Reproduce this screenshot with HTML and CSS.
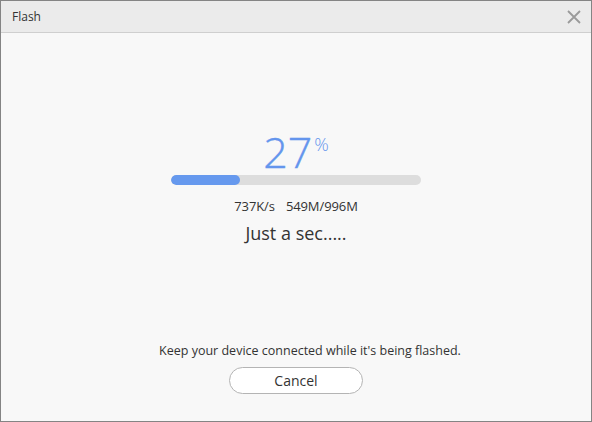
FILE: index.html
```html
<!DOCTYPE html>
<html lang="en">
<head>
  <meta charset="UTF-8">
  <title>Flash</title>
  <link rel="stylesheet" href="styles.css">
</head>
<body>
  <div class="window">
    <div class="titlebar">
      <span class="title">Flash</span>
      <svg class="close" width="14" height="14" viewBox="0 0 14 14">
        <path d="M1 1 L13 13 M13 1 L1 13" stroke="#9a9a9a" stroke-width="1.8" fill="none"/>
      </svg>
    </div>
    <div class="content">
      <div class="percent"><span class="num">27</span><span class="sign">%</span></div>
      <div class="track"><div class="fill" style="width: 27.6%"></div></div>
      <div class="stats"><span>737K/s</span><span>549M/996M</span></div>
      <div class="status">Just a sec.....</div>
      <div class="spacer"></div>
      <div class="note">Keep your device connected while it's being flashed.</div>
      <button class="cancel">Cancel</button>
    </div>
  </div>
</body>
</html>
```

FILE: styles.css
```css
html, body {
  margin: 0;
  padding: 0;
}
body {
  font-family: "Open Sans", "Noto Sans", sans-serif;
  color: #333;
}
.window {
  width: 592px;
  height: 422px;
  box-sizing: border-box;
  border: 1px solid #848484;
  background: #f8f8f8;
  display: flex;
  flex-direction: column;
}
.titlebar {
  height: 32px;
  box-sizing: border-box;
  background: #ebebeb;
  border-bottom: 1px solid #cfcfcf;
  display: flex;
  align-items: center;
  justify-content: space-between;
  padding: 0 10px 0 11px;
}
.title {
  font-size: 12px;
  color: #333;
}
.content {
  flex: 1;
  display: flex;
  flex-direction: column;
  align-items: center;
}
.percent {
  margin-top: 97px;
  height: 43px;
  line-height: 43px;
  color: #6495ed;
  display: flex;
  align-items: flex-start;
  margin-left: 0;
}
.num {
  font-size: 43px;
  font-weight: 300;
  -webkit-text-stroke: 0.4px #6495ed;
}
.sign {
  font-size: 18px;
  line-height: 28px;
  font-weight: 300;
  margin-left: 2px;
}
.track {
  margin-top: 2px;
  width: 250px;
  height: 10px;
  border-radius: 5px;
  background: #dddddd;
  overflow: hidden;
}
.fill {
  height: 100%;
  background: #6699ee;
  border-radius: 5px;
}
.stats {
  margin-top: 12px;
  font-size: 13px;
  line-height: 18px;
  display: flex;
  gap: 11px;
  letter-spacing: -0.1px;
}
.status {
  margin-top: 6px;
  font-size: 18px;
  line-height: 24px;
}
.spacer {
  flex: 1;
}
.note {
  font-size: 12.5px;
  line-height: 16px;
  padding-left: 28px;
}
.cancel {
  margin-top: 8px;
  margin-bottom: 27px;
  width: 134px;
  height: 27px;
  border: 1px solid #b4b4b4;
  border-radius: 14px;
  background: #ffffff;
  font-family: inherit;
  font-size: 14px;
  color: #333;
  padding: 0;
}
```
